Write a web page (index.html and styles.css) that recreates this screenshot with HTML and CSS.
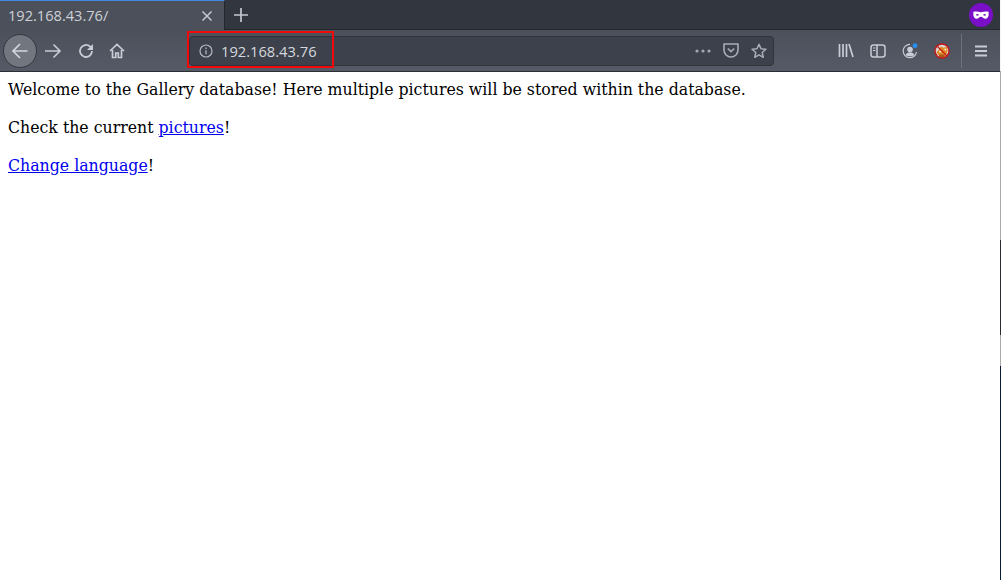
FILE: index.html
```html
<!DOCTYPE html>
<html lang="en">
<head>
<meta charset="utf-8">
<title>192.168.43.76/</title>
<link rel="stylesheet" href="styles.css">
</head>
<body>
<header class="chrome">
  <div class="tabbar">
    <div class="tab">
      <span class="tab-title">192.168.43.76/</span>
      <svg class="tab-close" width="10" height="10" viewBox="0 0 10 10"><path d="M.5.5l9 9M9.500.5l-9 9" stroke="#c4c8d0" stroke-width="1.500" fill="none"/></svg>
    </div>
    <svg class="new-tab" width="14" height="14" viewBox="0 0 14 14"><path d="M7 0v14M0 7h14" stroke="#c4c8d0" stroke-width="1.700" fill="none"/></svg>
    <div class="spacer"></div>
    <svg class="private" width="24" height="24" viewBox="0 0 24 24"><circle cx="12" cy="12" r="12" fill="#7a0fc8"/><path d="M4.500 8.800c2.200-.6 5-.3 7.500.5 2.500-.8 5.300-1.100 7.500-.5.600 3.400-.2 6.700-3 6.900-2.100.1-2.800-2-4.500-2s-2.400 2.100-4.500 2c-2.800-.2-3.600-3.500-3-6.900z" fill="#fff"/><ellipse cx="8.400" cy="11.800" rx="1.300" ry=".9" fill="#7a0fc8"/><ellipse cx="15.600" cy="11.800" rx="1.300" ry=".9" fill="#7a0fc8"/></svg>
  </div>
  <div class="navbar">
    <button class="back" type="button" aria-label="Back"><svg width="18" height="18" viewBox="0 0 18 18"><path d="M16.500 9H2M9 2L2 9l7 7" stroke="#d3d6dd" stroke-width="1.700" fill="none"/></svg></button>
    <svg class="nav-icon forward" width="18" height="18" viewBox="0 0 18 18"><path d="M1 9h15M9.500 2.500L16 9l-6.500 6.500" stroke="#c8ccd4" stroke-width="1.600" fill="none"/></svg>
    <svg class="nav-icon reload" width="16" height="16" viewBox="0 0 16 16"><path d="M14 8a6 6 0 1 1-2-4.500L14 5" stroke="#c8ccd4" stroke-width="1.800" fill="none"/><path d="M15 1v6H9z" fill="#c8ccd4"/></svg>
    <svg class="nav-icon home" width="16" height="16" viewBox="0 0 16 16"><path d="M1 8l7-6.500L15 8M3.500 7v7.500h3.200V10h2.600v4.500h3.200V7" stroke="#c8ccd4" stroke-width="1.700" fill="none"/></svg>
    <div class="urlbar">
      <svg class="info" width="14" height="14" viewBox="0 0 14 14"><circle cx="7" cy="7" r="6" stroke="#b4b8c1" stroke-width="1.200" fill="none"/><path d="M7 6.200v4M7 3.500v1.500" stroke="#b4b8c1" stroke-width="1.300"/></svg>
      <span class="url">192.168.43.76</span>
      <div class="spacer"></div>
      <svg class="dots" width="16" height="4" viewBox="0 0 16 4"><circle cx="2" cy="2" r="1.600" fill="#a4a8b2"/><circle cx="8" cy="2" r="1.600" fill="#a4a8b2"/><circle cx="14" cy="2" r="1.600" fill="#a4a8b2"/></svg>
      <svg class="pocket" width="16" height="15" viewBox="0 0 16 15"><path d="M1 1h14v6a7 7 0 0 1-14 0z" stroke="#a8acb6" stroke-width="1.600" fill="none" stroke-linejoin="round"/><path d="M4.800 5.500L8 8.500l3.200-3" stroke="#a8acb6" stroke-width="1.700" fill="none"/></svg>
      <svg class="star" width="16" height="16" viewBox="0 0 16 16"><path d="M8 1.300l2 4.500 4.900.5-3.700 3.200 1.100 4.800L8 11.800l-4.300 2.500 1.100-4.800L1.100 6.300 6 5.800z" stroke="#a8acb6" stroke-width="1.500" fill="none" stroke-linejoin="round"/></svg>
      <div class="highlight"></div>
    </div>
    <div class="tools">
      <svg width="16" height="15" viewBox="0 0 16 15"><path d="M1.500 1v13M5 1v13M8.500 1v13M11 1l4 13" stroke="#c8ccd4" stroke-width="1.700" fill="none"/></svg>
      <svg width="16" height="14" viewBox="0 0 16 14"><rect x="1" y="1" width="14" height="12" rx="2.500" stroke="#c8ccd4" stroke-width="1.500" fill="none"/><path d="M7 1v12" stroke="#c8ccd4" stroke-width="1.500"/><path d="M3 4h2.500M3 6.500h2.500" stroke="#c8ccd4" stroke-width="1"/></svg>
      <svg width="16" height="16" viewBox="0 0 16 16"><path d="M14.500 9A6.700 6.700 0 1 1 8 1.300" stroke="#c8ccd4" stroke-width="1.200" fill="none"/><circle cx="8" cy="6.500" r="2.800" fill="#c8ccd4"/><path d="M3.500 12c1-2 2.500-2.800 4.500-2.800s3.500.8 4.500 2.800C11 13.800 5 13.800 3.500 12z" fill="#c8ccd4"/><circle cx="13" cy="2.700" r="2.400" fill="#2a90f5"/></svg>
      <svg width="16" height="16" viewBox="0 0 16 16"><circle cx="8" cy="8" r="7" fill="#d8d4d0"/><path d="M2.500 9.500l4.500-6 2.500 1.300 3-1 1.200 3.200L12.500 11l-2 3.500h-4z" fill="#e08a22"/><path d="M4.500 7.500l3 1-1.500 1.500zM10 5.500l2.500.5-1 2z" fill="#f6efe4"/><path d="M5 11.500h5.500v3H5z" fill="#a85a18"/><circle cx="8" cy="8" r="7" stroke="#c4151c" stroke-width="1.400" fill="none"/><path d="M3 3l10 10" stroke="#c4151c" stroke-width="1.100"/></svg>
    </div>
    <div class="divider"></div>
    <svg class="menu" width="12" height="12" viewBox="0 0 12 12"><path d="M0 1.500h12M0 6h12M0 10.500h12" stroke="#c8ccd4" stroke-width="1.800"/></svg>
  </div>
</header>
<main class="content">
  <p>Welcome to the Gallery database! Here multiple pictures will be stored within the database.</p>
  <p>Check the current <a href="#pictures">pictures</a>!</p>
  <p><a href="#language">Change language</a>!</p>
</main>
<div class="edge"></div>
</body>
</html>
```
FILE: styles.css
```css
* { box-sizing: border-box; }
html, body { height: 100%; }
body {
  position: relative;
  margin: 0;
  background: #fff;
  font-family: "DejaVu Serif", serif;
  font-size: 15.75px;
  overflow: hidden;
}
.chrome { display: flex; flex-direction: column; height: 72px; }
.spacer { flex: 1; }
.tabbar {
  display: flex;
  align-items: center;
  height: 30px;
  background: #32363f;
  border-bottom: 1px solid #24272e;
  padding-right: 8px;
}
.tab {
  display: flex;
  align-items: center;
  width: 225px;
  height: 30px;
  margin-bottom: -1px;
  padding: 0 12px 2px 8px;
  background: #4c505b;
  border-top: 1px solid #3d8ae0;
  border-right: 1px solid #24272e;
  color: #cdd0d6;
  font: 14.6px "Open Sans", sans-serif;
}
.tab-title { flex: 1; }
.tab-close { margin-top: 2px; }
.new-tab { margin-left: 9px; }
.navbar {
  display: flex;
  align-items: center;
  height: 42px;
  background: linear-gradient(#4c505b, #565a66);
  border-bottom: 1px solid #2b2e35;
  padding: 0 0 0 3px;
}
.back {
  display: flex;
  align-items: center;
  justify-content: center;
  width: 34px;
  height: 34px;
  padding: 0;
  border: 1px solid #35383f;
  border-radius: 50%;
  background: #72767f;
}
.nav-icon { flex: none; }
.forward { margin-left: 7px; }
.reload { margin-left: 16px; }
.home { margin-left: 15px; }
.urlbar {
  position: relative;
  display: flex;
  align-items: center;
  width: 585px;
  height: 30px;
  margin-left: 64px;
  padding: 0 6px 0 9px;
  background: #3d414b;
  border: 1px solid #30333b;
  border-radius: 4px;
  color: #d5d8de;
  font: 14.7px "Open Sans", sans-serif;
}
.url { margin-left: 8px; }
.pocket { margin-left: 12px; }
.star { margin-left: 12px; }
.highlight {
  position: absolute;
  left: -3px;
  top: -6px;
  width: 147px;
  height: 37px;
  border: 2.500px solid #f00a0a;
}
.tools {
  display: flex;
  align-items: center;
  gap: 16px;
  margin-left: 64px;
}
.divider { width: 1px; height: 34px; margin-left: 11px; background: #6e727c; }
.menu { margin-left: 13px; }
.content { padding: 7px 8px 8px; color: #000; }
.content p { margin: 0 0 16px; line-height: 22px; }
.content a { color: #00e; }
.edge {
  position: absolute;
  top: 0;
  right: 0;
  width: 1px;
  height: 100%;
  background: linear-gradient(#f4f4f4 0 71px, #aaa 71px 240px, #2a2a30 240px 335px, #aaa 335px 366px, #0a1c30 366px);
}
```
